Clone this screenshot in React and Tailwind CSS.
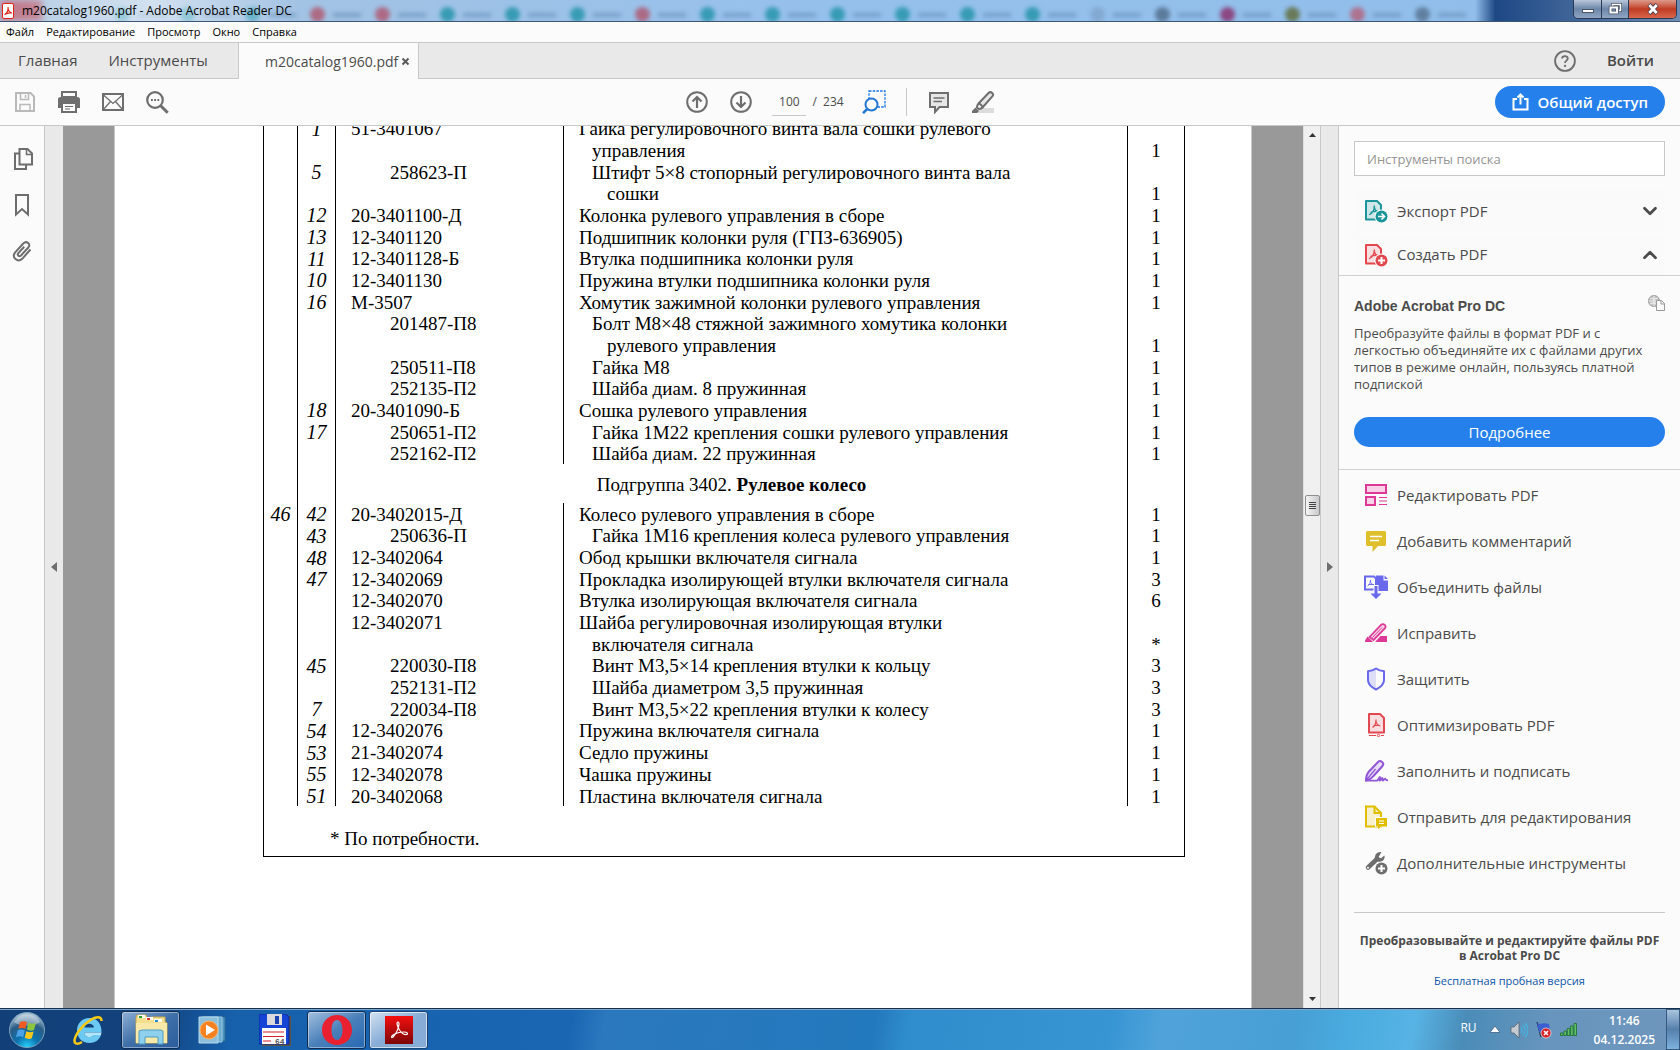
import { ChevronDown, ChevronUp } from "lucide-react";

const PARTS_TOP = [
  { pos: "1", code: "51-3401067", name: "Гайка регулировочного винта вала сошки рулевого" },
  { name: "управления", level: 1, qty: "1" },
  { pos: "5", code: "258623-П", sub: true, name: "Штифт 5×8 стопорный регулировочного винта вала", level: 1 },
  { name: "сошки", level: 2, qty: "1" },
  { pos: "12", code: "20-3401100-Д", name: "Колонка рулевого управления в сборе", qty: "1" },
  { pos: "13", code: "12-3401120", name: "Подшипник колонки руля (ГПЗ-636905)", qty: "1" },
  { pos: "11", code: "12-3401128-Б", name: "Втулка подшипника колонки руля", qty: "1" },
  { pos: "10", code: "12-3401130", name: "Пружина втулки подшипника колонки руля", qty: "1" },
  { pos: "16", code: "М-3507", name: "Хомутик зажимной колонки рулевого управления", qty: "1" },
  { code: "201487-П8", sub: true, name: "Болт М8×48 стяжной зажимного хомутика колонки", level: 1 },
  { name: "рулевого управления", level: 2, qty: "1" },
  { code: "250511-П8", sub: true, name: "Гайка М8", level: 1, qty: "1" },
  { code: "252135-П2", sub: true, name: "Шайба диам. 8 пружинная", level: 1, qty: "1" },
  { pos: "18", code: "20-3401090-Б", name: "Сошка рулевого управления", qty: "1" },
  { pos: "17", code: "250651-П2", sub: true, name: "Гайка 1М22 крепления сошки рулевого управления", level: 1, qty: "1" },
  { code: "252162-П2", sub: true, name: "Шайба диам. 22 пружинная", level: 1, qty: "1" },
];

const PARTS_WHEEL = [
  { fig: "46", pos: "42", code: "20-3402015-Д", name: "Колесо рулевого управления в сборе", qty: "1" },
  { pos: "43", code: "250636-П", sub: true, name: "Гайка 1М16 крепления колеса рулевого управления", level: 1, qty: "1" },
  { pos: "48", code: "12-3402064", name: "Обод крышки включателя сигнала", qty: "1" },
  { pos: "47", code: "12-3402069", name: "Прокладка изолирующей втулки включателя сигнала", qty: "3" },
  { code: "12-3402070", name: "Втулка изолирующая включателя сигнала", qty: "6" },
  { code: "12-3402071", name: "Шайба регулировочная изолирующая втулки" },
  { name: "включателя сигнала", level: 1, qty: "*" },
  { pos: "45", code: "220030-П8", sub: true, name: "Винт М3,5×14 крепления втулки к кольцу", level: 1, qty: "3" },
  { code: "252131-П2", sub: true, name: "Шайба диаметром 3,5 пружинная", level: 1, qty: "3" },
  { pos: "7", code: "220034-П8", sub: true, name: "Винт М3,5×22 крепления втулки к колесу", level: 1, qty: "3" },
  { pos: "54", code: "12-3402076", name: "Пружина включателя сигнала", qty: "1" },
  { pos: "53", code: "21-3402074", name: "Седло пружины", qty: "1" },
  { pos: "55", code: "12-3402078", name: "Чашка пружины", qty: "1" },
  { pos: "51", code: "20-3402068", name: "Пластина включателя сигнала", qty: "1" },
];

const INDENT = ["pl-[15px]", "pl-[28px]", "pl-[43px]"];

const MENU = ["Файл", "Редактирование", "Просмотр", "Окно", "Справка"];

// browser tabs showing through the glass title bar
const GLASS_TABS = [
  "bg-[#3a9fb8]", "bg-[#3a9fb8]", "bg-[#3a9fb8]", "bg-[#b0556c]", "bg-[#b0556c]", "bg-[#1f92a8]", "bg-[#1f92a8]",
  "bg-[#1f92a8]", "bg-[#b0556c]", "bg-[#1f92a8]", "bg-[#1f92a8]", "bg-[#1f92a8]", "bg-[#1f92a8]", "bg-[#1f92a8]",
  "bg-[#1f92a8]", "bg-[#7fa4cb]", "bg-[#4f6b88]", "bg-[#8a2a68]", "bg-[#5f6a35]", "bg-[#b5607a]", "bg-[#56718f]",
];

function Svg({ size = 24, className = "", children }) {
  return (
    <svg width={size} height={size} viewBox="0 0 24 24" fill="none" className={`shrink-0 ${className}`} aria-hidden="true">
      {children}
    </svg>
  );
}

function PdfMark({ color, width = 1.3 }) {
  return (
    <path
      d="M5.500 15.500c3.200-1.500 4.800-5.500 4.800-8.500M10.300 7c0 3.500 2 5.500 4.700 5.700M7 13.400c2-1 4.500-1.400 6.800-1"
      stroke={color}
      strokeWidth={width}
      strokeLinecap="round"
    />
  );
}

function DocBadge({ color, tint, children }) {
  return (
    <Svg>
      <path d="M2 2h11l4 4v14.500H2z" fill={tint} stroke={color} strokeWidth="2" strokeLinejoin="round" />
      <PdfMark color={color} />
      <circle cx="17.500" cy="17.500" r="7" fill="#fbfbfb" />
      <circle cx="17.500" cy="17.500" r="6" fill={color} />
      {children}
    </Svg>
  );
}

const TOOLS = [
  {
    label: "Редактировать PDF",
    icon: (
      <Svg>
        <rect x="2" y="2" width="20" height="8" fill="#f8d3e8" stroke="#dd3a97" strokeWidth="2" />
        <rect x="2" y="14" width="9" height="8" fill="#f8d3e8" stroke="#dd3a97" strokeWidth="2" />
        <path d="M15 14.500h8M15 18h8M15 21.500h8" stroke="#dd3a97" />
      </Svg>
    ),
  },
  {
    label: "Добавить комментарий",
    icon: (
      <Svg>
        <path d="M3.500 2h17A1.500 1.500 0 0 1 22 3.500v12a1.500 1.500 0 0 1-1.500 1.500H14l-5.500 6V17h-5A1.500 1.500 0 0 1 2 15.500v-12A1.500 1.500 0 0 1 3.500 2z" fill="#dfbf2c" />
        <path d="M6 7.500h12M6 11.500h9" stroke="#fff" strokeWidth="1.500" />
      </Svg>
    ),
  },
  {
    label: "Объединить файлы",
    icon: (
      <Svg>
        <path d="M1 1.500h9l2 2v11H1z" fill="#fbfbfb" stroke="#6a69ee" strokeWidth="2" />
        <path d="M3.500 11c2-1 3-3.500 3-6M6.500 6c0 2.500 1.500 3.500 3.500 3.700M4.500 9.500h5" stroke="#6a69ee" />
        <path d="M12 .5h7.500v5H24V16H12z" fill="#6a69ee" />
        <path d="M20.500.5L24 4h-3.500z" fill="#6a69ee" />
        <path d="M12 10v8" stroke="#fbfbfb" strokeWidth="5" />
        <path d="M10.500 11h3v7.500h4L12 24l-5.500-5.500h4z" fill="#6a69ee" />
      </Svg>
    ),
  },
  {
    label: "Исправить",
    icon: (
      <Svg>
        <path d="M5.500 16L17 4c2.500-2.300 6.200.8 3.800 3.500L9.500 19z" fill="#f8d3e8" stroke="#dd3a97" strokeWidth="1.800" />
        <path d="M3.500 15.500L9 21H1v-1.500z" fill="#dd3a97" />
        <path d="M16.500 15H23v6H11z" fill="#dd3a97" />
        <path d="M8.500 16.500l9.500-10" stroke="#dd3a97" strokeWidth="1" />
      </Svg>
    ),
  },
  {
    label: "Защитить",
    icon: (
      <Svg>
        <path d="M12 2v20.500C6 19.500 4 17 4 13V4.500C7 4.300 10 3.500 12 2z" fill="#dedefa" />
        <path d="M12 1.500c2.500 1.800 5 2.600 8 2.800V13c0 4-3 7-8 9.500C7 20 4 17 4 13V4.300c3-.2 5.500-1 8-2.800z" stroke="#6a69ee" strokeWidth="2" strokeLinejoin="round" />
      </Svg>
    ),
  },
  {
    label: "Оптимизировать PDF",
    icon: (
      <Svg>
        <path d="M5 1h11l4 4v14.500H5z" fill="#f9dfe1" stroke="#e34850" strokeWidth="2" strokeLinejoin="round" />
        <path d="M8.500 14.500c2.500-1.500 3.500-4.500 3.500-8M12 8c.3 3 2 4.500 4.500 5M9.500 12.500h6" stroke="#e34850" strokeWidth="1.200" />
        <path d="M5 22.500h7M17 22.500h3" stroke="#e34850" />
        <circle cx="14.500" cy="22.500" r="1.200" stroke="#e34850" />
      </Svg>
    ),
  },
  {
    label: "Заполнить и подписать",
    icon: (
      <Svg>
        <path d="M2 21.500c0-4 .8-6.500 3-9L14 3c2.500-2.500 6.800 1 4.500 4l-9 10c-2 2.500-4 4-7.500 4.500z" fill="#e9dcf8" stroke="#9256d9" strokeWidth="2" />
        <path d="M2 21.500l9.500-11.500" stroke="#9256d9" strokeWidth="1.300" />
        <path d="M2 21.700h11c1-.2 2.500-4 3-3.700s-1 3.700 0 3.700 1.500-3 2.300-2.700-.3 2.700.7 2.700 1-2 2-2 .3 2 3 1.500" stroke="#9256d9" strokeWidth="1.800" />
      </Svg>
    ),
  },
  {
    label: "Отправить для редактирования",
    icon: (
      <Svg>
        <path d="M2 1.500h8.500L17 8v13.500H2z" fill="#f7f0cd" stroke="#dfbf00" strokeWidth="2" />
        <path d="M10.500 1.500V8H17" stroke="#dfbf00" strokeWidth="2" />
        <path d="M11 12h13v10h-6l-4 3v-3h-3z" fill="#fbfbfb" />
        <path d="M12 13h11v8.500h-5.500L14 24v-2.500h-2z" fill="#dfbf00" />
        <path d="M15 16h5M15 18.500h5" stroke="#fff" strokeWidth="1.200" />
      </Svg>
    ),
  },
  {
    label: "Дополнительные инструменты",
    icon: (
      <Svg>
        <path d="M4 16.500l9-8.500" stroke="#6e6e6e" strokeWidth="4.500" strokeLinecap="round" />
        <path d="M17.500 1c-4-.8-7.500 2.500-6.300 6.700 1.300 3.600 6 4.300 8.300 1.300 1.200-1.600 1.300-3 .9-4.500L17 7.300l-2.500-1z" fill="#6e6e6e" />
        <circle cx="4" cy="16.800" r="1" fill="#fbfbfb" />
        <circle cx="17.500" cy="17.500" r="7" fill="#fbfbfb" />
        <circle cx="17.500" cy="17.500" r="6" fill="#6e6e6e" />
        <path d="M17.500 14v7M14 17.500h7" stroke="#fff" strokeWidth="2" />
      </Svg>
    ),
  },
];

function TitleBar() {
  return (
    <header className="relative flex h-[22px] shrink-0 items-center overflow-hidden border-b border-[#3d5675] bg-linear-to-r from-[#a9c4df] via-[#95c0ec] to-[#8fbde9]">
      <div className="absolute inset-0 flex overflow-hidden" aria-hidden="true">
        <span className="h-full w-[42px] shrink-0 bg-[#b5677c] blur-[3px]" />
        <span className="w-[73px] shrink-0" />
        {GLASS_TABS.map((color, i) => (
          <span key={i} className="flex w-[65px] shrink-0 items-center gap-2 pt-2">
            <span className={`size-[15px] rounded-full opacity-80 blur-[2px] ${color}`} />
            <span className="h-1 w-7 bg-[#5f88b4]/60 blur-[2px]" />
          </span>
        ))}
      </div>
      <div className="absolute inset-y-0 left-0 w-[300px] bg-linear-to-r from-white/10 via-white/50 to-transparent" />
      <div className="absolute inset-y-0 right-0 w-[205px] bg-linear-to-r from-transparent via-[#1d4884] via-10% to-[#6f8db4]" />
      <div className="relative flex min-w-0 flex-1 items-center gap-2 pl-[2px]">
        <svg width="12" height="16" viewBox="0 0 12 16" fill="none" className="shrink-0" aria-hidden="true">
          <rect x=".5" y=".5" width="11" height="15" rx="1.500" fill="#fff" stroke="#e1251b" />
          <path d="M2.500 11.500c3-1 4-5 3.500-7.500 0 3 1.500 5.500 4 6-2.500-.5-5 0-7.500 1.500z" stroke="#e1251b" strokeWidth="1.200" />
        </svg>
        <h1 className="truncate text-[12px] leading-4 text-black">m20catalog1960.pdf - Adobe Acrobat Reader DC</h1>
      </div>
      <div className="relative mr-[3px] flex h-[19px] self-start overflow-hidden rounded-b-[5px] border border-t-0 border-[#2b3b55]">
        <button aria-label="Свернуть" className="flex w-[28px] items-center justify-center border-r border-[#2b3b55] bg-linear-to-b from-[#b9c7da] via-[#6d86a9] to-[#90a6c4]">
          <span className="mt-1 h-[4px] w-[12px] border border-[#4a5568] bg-white" />
        </button>
        <button aria-label="Свернуть в окно" className="flex w-[27px] items-center justify-center border-r border-[#2b3b55] bg-linear-to-b from-[#b9c7da] via-[#6d86a9] to-[#90a6c4]">
          <svg width="14" height="12" viewBox="0 0 14 12" fill="none" aria-hidden="true">
            <path d="M4.500 3V1.500h8v6H11" stroke="#4a5568" strokeWidth="3" />
            <path d="M4.500 3V1.500h8v6H11" stroke="#fff" strokeWidth="1.500" />
            <rect x="2.500" y="4.500" width="6.500" height="5" stroke="#4a5568" strokeWidth="3.500" />
            <rect x="2.500" y="4.500" width="6.500" height="5" stroke="#fff" strokeWidth="2" />
          </svg>
        </button>
        <button aria-label="Закрыть" className="flex w-[47px] items-center justify-center bg-linear-to-b from-[#dc9a8a] via-[#c03a22] to-[#d9674c]">
          <svg width="14" height="12" viewBox="0 0 14 12" fill="none" aria-hidden="true">
            <path d="M3 1.500l8 9M11 1.500l-8 9" stroke="#4f3a45" strokeWidth="4.500" />
            <path d="M3.300 2l7.400 8M10.700 2l-7.400 8" stroke="#fff" strokeWidth="2.800" />
          </svg>
        </button>
      </div>
    </header>
  );
}

function TabBar() {
  return (
    <div className="flex h-[36px] shrink-0 bg-[#e9e9e9] text-[15px] text-[#4b4b4b]">
      <div className="flex w-[239px] items-center gap-[31px] border-r border-b border-[#c8c8c8] pl-[18px]">
        <button>Главная</button>
        <button>Инструменты</button>
      </div>
      <div className="flex w-[179px] items-center justify-between bg-[#fbfbfb] pr-[8px] pl-[26px]">
        <span className="text-[14px]">m20catalog1960.pdf</span>
        <button aria-label="Закрыть вкладку">
          <svg width="9" height="9" viewBox="0 0 9 9" aria-hidden="true">
            <path d="M1.500 1.500l6 6M7.500 1.500l-6 6" stroke="#5a5a5a" strokeWidth="2" />
          </svg>
        </button>
      </div>
      <div className="flex flex-1 items-center justify-end gap-[31px] border-b border-l border-[#c8c8c8] pr-[26px]">
        <button aria-label="Справка">
          <Svg size={22} className="block">
            <circle cx="12" cy="12" r="10.800" stroke="#6e6e6e" strokeWidth="2" />
            <path d="M8.800 9.300c.2-3.600 6.300-3.500 6.200 0 0 2.300-3 2.300-3 4.900" stroke="#6e6e6e" strokeWidth="2" />
            <circle cx="12" cy="17.300" r="1.300" fill="#6e6e6e" />
          </Svg>
        </button>
        <button className="font-semibold">Войти</button>
      </div>
    </div>
  );
}

function Toolbar() {
  return (
    <div className="grid h-[47px] shrink-0 grid-cols-[1fr_auto_1fr] items-center border-b border-[#c8c8c8] bg-[#fbfbfb] pr-[15px] pl-[13px]">
      <div className="flex items-center gap-[20px]">
        <button aria-label="Сохранить">
          <Svg className="block">
            <path d="M3 3h14.500L21 6.500V21H3z" stroke="#b9b9b9" strokeWidth="2" />
            <path d="M7.500 3v6.500h8V3M7 21v-6.500h10V21" stroke="#b9b9b9" strokeWidth="1.500" />
            <path d="M12.500 5v3" stroke="#b9b9b9" strokeWidth="1.500" />
          </Svg>
        </button>
        <button aria-label="Печать">
          <Svg className="block">
            <path d="M5 2h14v5H5z" stroke="#6e6e6e" strokeWidth="2" />
            <path d="M1 9.500A2.500 2.500 0 0 1 3.500 7h17A2.500 2.500 0 0 1 23 9.500V18H1z" fill="#6e6e6e" />
            <path d="M5 13h14v9H5z" fill="#fbfbfb" stroke="#6e6e6e" strokeWidth="2" />
            <path d="M8 16.500h8M8 19h5" stroke="#6e6e6e" />
          </Svg>
        </button>
        <button aria-label="Отправить по почте">
          <Svg className="block">
            <path d="M2 4h20v16H2z" stroke="#6e6e6e" strokeWidth="2" />
            <path d="M2.500 5l9.500 8.500L21.500 5M2.500 19.500l7-8M21.500 19.500l-7-8" stroke="#6e6e6e" strokeWidth="1.300" />
          </Svg>
        </button>
        <button aria-label="Найти">
          <Svg className="block">
            <circle cx="10" cy="10" r="7.800" stroke="#6e6e6e" strokeWidth="2.200" />
            <path d="M15.700 15.700l7 7" stroke="#6e6e6e" strokeWidth="3" />
            <path d="M6 10h1.800M9.200 10H11M12.400 10h1.800" stroke="#6e6e6e" strokeWidth="1.800" />
          </Svg>
        </button>
      </div>

      <div className="flex items-center pl-[2px]">
        <button aria-label="Предыдущая страница">
          <Svg className="block">
            <circle cx="12" cy="12" r="9.800" stroke="#6e6e6e" strokeWidth="2" />
            <path d="M12 18V7.500M7.500 11.500L12 7l4.500 4.500" stroke="#6e6e6e" strokeWidth="2.200" />
          </Svg>
        </button>
        <button aria-label="Следующая страница" className="ml-[20px]">
          <Svg className="block">
            <circle cx="12" cy="12" r="9.800" stroke="#6e6e6e" strokeWidth="2" />
            <path d="M12 6v10.500M7.500 12.500L12 17l4.500-4.500" stroke="#6e6e6e" strokeWidth="2.200" />
          </Svg>
        </button>
        <input
          aria-label="Номер страницы"
          defaultValue="100"
          className="ml-[19px] h-[28px] w-[34px] border-b border-[#c8c8c8] bg-transparent text-center text-[12px] text-[#4b4b4b] outline-none"
        />
        <span className="ml-[6px] text-[12px] text-[#4b4b4b]">/&nbsp; 234</span>
        <button aria-label="Масштаб выделения" className="ml-[18px]">
          <Svg className="block">
            <rect x="7" y="1" width="16" height="16" stroke="#1473e6" strokeWidth="1.300" strokeDasharray="2.500 1.200" />
            <circle cx="9.500" cy="14.500" r="6" fill="#fbfbfb" stroke="#2277d4" strokeWidth="2" />
            <path d="M5.200 19L1 23.200" stroke="#2277d4" strokeWidth="2.500" />
          </Svg>
        </button>
        <span className="ml-[20px] h-[28px] w-px bg-[#c8c8c8]" />
        <button aria-label="Комментарий" className="ml-[20px]">
          <Svg className="block">
            <path d="M3 3h18v14h-8.500L8 22v-5H3z" fill="#e6e6e6" stroke="#6e6e6e" strokeWidth="2" />
            <path d="M6.500 8h11M6.500 11.500h8.500" stroke="#6e6e6e" strokeWidth="1.300" />
          </Svg>
        </button>
        <button aria-label="Выделение цветом" className="ml-[20px]">
          <Svg className="block">
            <path d="M8 18h15v5H5z" fill="#dcdcdc" />
            <path d="M8 13L17.500 3c2.500-2.300 6 .9 3.800 3.400L12 17z" fill="#e6e6e6" stroke="#6e6e6e" strokeWidth="2" />
            <path d="M8 13c-1.500 1.500-2 3-2 4.500l2 1.500c1.500 0 3-.8 4-2" stroke="#6e6e6e" strokeWidth="2" />
            <path d="M4.500 17.500L8 21l-2 2H1v-2z" fill="#6e6e6e" />
          </Svg>
        </button>
      </div>

      <button className="flex h-[32px] items-center gap-[9px] justify-self-end rounded-full bg-[#2680eb] px-[17px] text-[15px] font-semibold text-white">
        <svg width="17" height="18" viewBox="0 0 17 18" fill="none" aria-hidden="true">
          <path d="M5 6H1.500v10.500h14V6H12" stroke="#fff" strokeWidth="2" />
          <path d="M8.500 11.500V3M5.500 4.500l3-3 3 3" stroke="#fff" strokeWidth="2" />
        </svg>
        Общий доступ
      </button>
    </div>
  );
}

function LeftRail() {
  return (
    <>
      <nav className="flex w-[45px] shrink-0 flex-col items-start gap-[22px] border-r border-[#c8c8c8] bg-[#fbfbfb] pt-[21px] pl-[10px]">
        <button aria-label="Миниатюры страниц">
          <Svg className="block">
            <path d="M9.500 2h8l4.500 4.500v11H9.500z" stroke="#6e6e6e" strokeWidth="2" />
            <path d="M16.500 2v5.500H22" stroke="#6e6e6e" strokeWidth="1.500" />
            <path d="M9 6.500H5V22h11v-4" stroke="#6e6e6e" strokeWidth="2" />
          </Svg>
        </button>
        <button aria-label="Закладки">
          <Svg className="block">
            <path d="M6 2h12v19.500L12 16l-6 5.500z" stroke="#6e6e6e" strokeWidth="2" />
          </Svg>
        </button>
        <button aria-label="Вложения">
          <Svg className="block">
            <path
              d="M20.500 10.500l-8.300 9.300c-4.500 4.400-11-1.500-7-6.500l8.300-9c3.200-3 7.500.8 4.800 4.200l-7.300 8c-2 1.800-4.300-.3-2.600-2.400l5.800-6.300"
              stroke="#6e6e6e"
              strokeWidth="2"
            />
          </Svg>
        </button>
      </nav>
      <button aria-label="Скрыть панель навигации" className="flex w-[18px] shrink-0 items-center justify-center bg-[#e9e9e9]">
        <svg width="6" height="10" viewBox="0 0 6 10" aria-hidden="true">
          <path d="M6 0v10L0 5z" fill="#6e6e6e" />
        </svg>
      </button>
    </>
  );
}

function PartRow({ fig, pos, code, sub, name, level = 0, qty }) {
  return (
    <tr>
      <td className="border-r border-black pt-[2px] text-center text-[20px] italic">{fig}</td>
      <td className="border-r border-black pt-[2px] text-center text-[20px] italic">{pos}</td>
      <td className={`border-r border-black pt-[3px] ${sub ? "pl-[54px]" : "pl-[15px]"}`}>{code}</td>
      <td className={`border-r border-black pt-[3px] ${INDENT[level]}`}>{name}</td>
      <td className="pt-[3px] text-center">{qty}</td>
    </tr>
  );
}

function Document() {
  return (
    <main className="flex min-w-0 flex-1 overflow-hidden bg-[#999999] px-[51px]">
      <article className="min-w-0 flex-1 overflow-hidden border-x border-[#c8c8c8] bg-white">
        <div className="-mt-[9px] ml-[148px] w-[922px] border border-t-0 border-black pb-[8px] font-['Liberation_Serif','Times_New_Roman',serif] text-[19px] leading-[18px] text-black">
          <table className="h-[689px] w-full table-fixed border-separate border-spacing-0">
            <colgroup>
              <col className="w-[34px]" />
              <col className="w-[38px]" />
              <col className="w-[228px]" />
              <col className="w-[564px]" />
              <col />
            </colgroup>
            <tbody>
              {PARTS_TOP.map((part, i) => (
                <PartRow key={i} {...part} />
              ))}
              <tr className="h-[39px]">
                <td className="border-r border-black" />
                <td className="border-r border-black" />
                <td colSpan={2} className="border-r border-black pt-[3px] text-center">
                  Подгруппа 3402. <b>Рулевое колесо</b>
                </td>
                <td />
              </tr>
              {PARTS_WHEEL.map((part, i) => (
                <PartRow key={i} {...part} />
              ))}
            </tbody>
          </table>
          <p className="mt-[24px] ml-[66px]">* По потребности.</p>
        </div>
      </article>
    </main>
  );
}

function Scrollbar() {
  return (
    <>
      <div className="flex w-[17px] shrink-0 flex-col items-center border-l border-[#e0e0e0] bg-[#f0f0f0] py-[7px]" aria-hidden="true">
        <svg width="7" height="4" viewBox="0 0 7 4">
          <path d="M0 4h7L3.500 0z" fill="#333" />
        </svg>
        <span className="mt-[358px] flex h-[21px] w-[15px] flex-col items-center justify-center gap-px rounded-[2px] border border-[#8f8f8f] bg-linear-to-r from-[#f5f5f5] to-[#c9c9cb]">
          <span className="h-px w-[7px] bg-[#444]" />
          <span className="h-px w-[7px] bg-[#444]" />
          <span className="h-px w-[7px] bg-[#444]" />
          <span className="h-px w-[7px] bg-[#444]" />
        </span>
        <svg width="7" height="4" viewBox="0 0 7 4" className="mt-auto">
          <path d="M0 0h7L3.500 4z" fill="#333" />
        </svg>
      </div>
      <button aria-label="Скрыть панель инструментов" className="flex w-[18px] shrink-0 items-center justify-center border-l border-[#c8c8c8] bg-[#e9e9e9]">
        <svg width="6" height="10" viewBox="0 0 6 10" aria-hidden="true">
          <path d="M0 0v10l6-5z" fill="#6e6e6e" />
        </svg>
      </button>
    </>
  );
}

function ToolsPanel() {
  return (
    <aside className="flex w-[342px] shrink-0 flex-col overflow-hidden border-l border-[#c8c8c8] bg-[#fbfbfb] text-[#4b4b4b]">
      <div className="border-b border-[#d0d0d0] px-[15px] pt-[15px]">
        <input
          type="search"
          aria-label="Инструменты поиска"
          placeholder="Инструменты поиска"
          className="h-[35px] w-full border border-[#c8c8c8] bg-white px-[12px] text-[13px] outline-none placeholder:text-[#959595]"
        />
        <button className="mt-[14px] flex h-[42px] w-full items-center gap-[9px] bg-[#fafafa] pr-[4px] pl-[10px] text-[15px]">
          <DocBadge color="#1b959a" tint="#cfe7e8">
            <path d="M14 17.500h6M17.500 14.500l3 3-3 3" stroke="#fff" strokeWidth="1.600" />
          </DocBadge>
          Экспорт PDF
          <ChevronDown size={22} strokeWidth={3} className="ml-auto" />
        </button>
        <button className="mt-[2px] flex h-[41px] w-full items-center gap-[9px] bg-[#fafafa] pr-[4px] pl-[10px] text-[15px]">
          <DocBadge color="#e34850" tint="#f9dfe1">
            <path d="M17.500 14v7M14 17.500h7" stroke="#fff" strokeWidth="2" />
          </DocBadge>
          Создать PDF
          <ChevronUp size={22} strokeWidth={3} className="ml-auto" />
        </button>
      </div>

      <section className="border-b border-[#d0d0d0] px-[15px] pt-[19px] pb-[22px]">
        <div className="flex items-start justify-between">
          <h2 className="mt-[1px] font-['Liberation_Sans',Arial,sans-serif] text-[14px] leading-[20px] font-bold">Adobe Acrobat Pro DC</h2>
          <svg width="17" height="16" viewBox="0 0 17 16" fill="none" aria-hidden="true">
            <circle cx="6" cy="6" r="5.500" fill="#c4c4c4" stroke="#999" />
            <path d="M.5 6h11M6 .5v11M2 3c2.500 1.200 5.500 1.200 8 0M2 9c2.500-1.200 5.500-1.200 8 0" stroke="#fff" strokeWidth=".7" />
            <path d="M8.500 5.500h5l3 3v7h-8z" fill="#fbfbfb" stroke="#999" />
            <path d="M13 5.500V9h3.500" stroke="#999" />
          </svg>
        </div>
        <p className="mt-[9px] w-[290px] text-[13px] leading-[17px]">
          Преобразуйте файлы в формат PDF и с легкостью объединяйте их с файлами других типов в режиме онлайн, пользуясь платной подпиской
        </p>
        <button className="mt-[24px] h-[30px] w-full rounded-full bg-[#2680eb] text-[15px] text-white">Подробнее</button>
      </section>

      <ul className="mx-[15px] border-b border-[#c8c8c8] pt-[2px] pb-[26px]">
        {TOOLS.map((tool) => (
          <li key={tool.label}>
            <button className="flex h-[46px] w-full items-center gap-[9px] pl-[10px] text-[15px]">
              {tool.icon}
              {tool.label}
            </button>
          </li>
        ))}
      </ul>

      <footer className="px-[15px] pt-[20px] text-center text-[12px] leading-[15px]">
        <p className="font-bold">
          Преобразовывайте и редактируйте файлы PDF
          <br />в Acrobat Pro DC
        </p>
        <a href="#" className="mt-[10px] inline-block text-[11px] text-[#0d55a8]">
          Бесплатная пробная версия
        </a>
      </footer>
    </aside>
  );
}

function Taskbar() {
  return (
    <footer className="relative flex h-[42px] shrink-0 items-center border-t border-[#16304e] bg-[linear-gradient(100deg,#123f78_0%,#12427c_9%,#1660ac_14%,#1a66b3_34%,#2b78be_36%,#2379bd_52%,#2f8dcd_54%,#3795d3_66%,#4fa3da_69%,#479fd5_77%,#49abdf_80%,#57b3e4_84%,#4a8cb8_87%,#6795bd_92%,#6f96bd_100%)] shadow-[inset_0_1px_0_#7fa8cc]">
      <button aria-label="Пуск" className="ml-[8px]">
        <svg width="38" height="38" viewBox="0 0 38 38" aria-hidden="true">
          <defs>
            <radialGradient id="orb" cx=".5" cy="1" r=".95">
              <stop offset="0" stopColor="#27d6ff" />
              <stop offset=".35" stopColor="#0c74b0" />
              <stop offset=".7" stopColor="#2a5c86" />
              <stop offset="1" stopColor="#a9c4d6" />
            </radialGradient>
          </defs>
          <circle cx="19" cy="19" r="17.500" fill="url(#orb)" stroke="#7ba2bd" />
          <path d="M6 11a15 15 0 0 1 26 0c-7 5-19 5-26 0z" fill="#fff" opacity=".35" />
          <path d="M12 11c2.500-1.300 4.800-1 7 .3L17.300 18c-2.300-1.300-4.500-1.300-7-.2z" fill="#ee5a24" />
          <path d="M20.500 11.800c2.500 1.300 5 1.300 7.500.2L26 19c-2.500 1-5 .8-7.200-.4z" fill="#8cc63e" />
          <path d="M9.800 19.300c2.500-1.200 4.800-1 7 .2l-1.700 6.800c-2.300-1.300-4.700-1.200-7.100 0z" fill="#4aa3e8" />
          <path d="M18.400 20.200c2.300 1.200 4.700 1.400 7.200.4l-1.800 6.700c-2.500 1-4.900.7-7.100-.5z" fill="#fbc81e" />
        </svg>
      </button>
      <button aria-label="Internet Explorer" className="ml-[26px]">
        <svg width="32" height="32" viewBox="0 0 32 32" fill="none" aria-hidden="true">
          <path
            fillRule="evenodd"
            d="M17.500 4C10 4 5 9.500 5 16.500S10 29 17.500 29c5.500 0 9.800-3 11.500-8h-7.500c-2.500 3.500-9 2.500-9.200-2.500H29.500C30 10 25 4 17.500 4zm-5 9.500c.8-5 9-5 9.500 0z"
            fill="#6cc9f1"
          />
          <path d="M12.300 18.500h17.200l-.5 2.500h-7.500c-2.500 3.500-9 2.500-9.200-2.500z" fill="#b4e6fa" />
          <path d="M29.500 7c.5-5-6-4.500-11.500-.8C10.500 11 3.500 20 2.500 26c-.5 4.500 3.500 4.500 7.500 2" stroke="#f6c915" strokeWidth="2.500" />
        </svg>
      </button>
      <button aria-label="Проводник" className="ml-[17px] flex h-[38px] w-[59px] items-center justify-center rounded-[3px] border border-[#0f2c50] bg-linear-to-br from-[#8fb0d4] via-[#3f6fa8] to-[#2a5d9e] inset-ring inset-ring-white/40">
        <svg width="34" height="31" viewBox="0 0 34 31" aria-hidden="true">
          <path d="M2 4l1-3h9l1 3h3l1-1h14v5l2 1v20H2z" fill="#f3df8e" stroke="#c9a94c" />
          <path d="M4 1h7v3H4z" fill="#fff" />
          <path d="M5 2h3v2H5z" fill="#2ca02c" />
          <path d="M12 3h7v3h-7z" fill="#fff" />
          <path d="M13 4h3v2h-3z" fill="#d33" />
          <path d="M20 5h8v3h-8z" fill="#fff" />
          <path d="M21 6h3v2h-3z" fill="#28c" />
          <path d="M2 9h31v20H2z" fill="#f8e9a8" />
          <path d="M5 17l3-1h19l2 1v13h-5v-7H11v7H5z" fill="#8fd0ee" stroke="#4f9cc4" />
        </svg>
      </button>
      <button aria-label="Проигрыватель Windows Media" className="ml-[17px]">
        <svg width="30" height="28" viewBox="0 0 30 28" aria-hidden="true">
          <path d="M8 1h20v24H8z" fill="#4e93bd" stroke="#2c6c98" />
          <path d="M5 1h20v25H5z" fill="#69acd0" stroke="#9dcbe3" />
          <path d="M2 1h19v26H2z" fill="#8bbfdc" stroke="#b6dbee" />
          <circle cx="12" cy="14" r="9" fill="#f58220" stroke="#fbb46c" />
          <path d="M9 8.500v11l9-5.500z" fill="#fff" />
        </svg>
      </button>
      <button aria-label="Total Commander" className="ml-[32px]">
        <svg width="32" height="32" viewBox="0 0 32 32" aria-hidden="true">
          <path d="M3 2h29v30H3z" fill="#5d5348" />
          <path d="M0 0h27l3 3v27H0z" fill="#1443d6" stroke="#0b2a96" />
          <path d="M8 0h15v11H8z" fill="#d9d9de" />
          <path d="M16 2h4v8h-4z" fill="#1a3fb0" />
          <path d="M3 14h24v16H3z" fill="#fff" />
          <path d="M4 18h21M4 22.500h21M4 27h8" stroke="#d11f2d" strokeWidth="1.200" />
          <text x="16" y="30" fontSize="8" fontWeight="700" fill="#555" fontFamily="Liberation Mono, monospace">64</text>
        </svg>
      </button>
      <button aria-label="Opera" className="ml-[16px] flex h-[38px] w-[59px] items-center justify-center rounded-[3px] border border-[#0f2c50] bg-linear-to-br from-[#a3c0de] via-[#4a80ba] to-[#2468b2] inset-ring inset-ring-white/40">
        <svg width="32" height="32" viewBox="0 0 32 32" aria-hidden="true">
          <path
            fillRule="evenodd"
            d="M16 1C7.500 1 1 7.500 1 16s6.500 15 15 15 15-6.500 15-15S24.500 1 16 1zm0 5c3.500 0 5.500 4.500 5.500 10S19.500 26 16 26s-5.500-4.500-5.500-10S12.500 6 16 6z"
            fill="#e8202f"
          />
        </svg>
      </button>
      <button aria-label="Adobe Acrobat Reader" className="ml-[3px] flex h-[38px] w-[59px] items-center justify-center rounded-[3px] border border-[#1d4470] bg-linear-to-br from-[#d4e2f1] via-[#87acd6] to-[#86add8] inset-ring inset-ring-white/60">
        <svg width="28" height="28" viewBox="0 0 28 28" fill="none" aria-hidden="true">
          <defs>
            <linearGradient id="adobe" x2="0" y2="1">
              <stop stopColor="#f50f0f" />
              <stop offset="1" stopColor="#7a0608" />
            </linearGradient>
          </defs>
          <path d="M0 0h28v28H0z" fill="url(#adobe)" />
          <path d="M13 6c-2 0-.5 5 1.500 8s5 5 7 4.500 1-2.500-2.500-2.500c-4 0-8 1-11 3-2.500 1.700-1.500 3.500.5 1.500 2.500-2.500 5.500-9 5.500-12.500 0-1.500-.5-2-1-2z" stroke="#fff" strokeWidth="1.200" />
        </svg>
      </button>

      <div className="ml-auto flex h-full items-center text-[12px] text-white">
        <span className="mb-1">RU</span>
        <button aria-label="Отображать скрытые значки" className="ml-[13px]">
          <svg width="10" height="7" viewBox="0 0 10 7" aria-hidden="true">
            <path d="M0 6.500h10L5 0z" fill="#fff" stroke="#3d5f83" strokeWidth=".8" />
          </svg>
        </button>
        <svg width="18" height="18" viewBox="0 0 18 18" fill="none" className="ml-[10px]" aria-hidden="true">
          <path d="M1 6h3l5-5v16l-5-5H1z" fill="#c5cbd1" stroke="#59636c" strokeWidth=".8" />
          <path d="M11 6c1.500 2 1.500 4 0 6M13 4c2.700 3 2.700 7 0 10M15 2c4 4 4 10 0 14" stroke="#45b5e0" strokeWidth="1.200" />
        </svg>
        <svg width="17" height="18" viewBox="0 0 17 18" fill="none" className="ml-[7px]" aria-hidden="true">
          <path d="M2 1l4 15" stroke="#234" strokeWidth="1.200" />
          <path d="M2 2c4 2 6-1 12 1l1 8c-5-2-7 1-11 0z" fill="#3b5fd0" />
          <circle cx="11" cy="12" r="5" fill="#d3222a" stroke="#fbe6e6" strokeWidth=".7" />
          <path d="M9 10l4 4M13 10l-4 4" stroke="#fff" strokeWidth="1.600" />
        </svg>
        <svg width="17" height="13" viewBox="0 0 17 13" className="ml-[8px]" aria-hidden="true">
          <path d="M.5 10h2.500v2.500H.5zM4 8h2.500v4.500H4zM7.300 5.500h2.500v7H7.300zM10.600 3h2.500v9.500h-2.500zM14 .5h2.500v12H14z" fill="#5fc26b" stroke="#1c6a2a" strokeWidth=".8" />
        </svg>
        <div className="ml-[17px] text-center leading-[19px] font-semibold">
          <p>11:46</p>
          <p>04.12.2025</p>
        </div>
        <button aria-label="Свернуть все окна" className="ml-[11px] h-full w-[14px] border border-[#35597f] bg-linear-to-b from-[#a9c4de] via-[#5580ab] to-[#7fb2df]" />
      </div>
    </footer>
  );
}

export default function App() {
  return (
    <div className="flex h-screen flex-col overflow-hidden bg-[#fbfbfb] font-['Open_Sans','Segoe_UI',sans-serif]">
      <TitleBar />
      <nav className="flex h-[21px] shrink-0 items-center gap-[12px] border-b border-[#c8c8c8] pl-[6px] text-[11px] leading-4 text-black">
        {MENU.map((item) => (
          <button key={item}>{item}</button>
        ))}
      </nav>
      <TabBar />
      <Toolbar />
      <div className="flex min-h-0 flex-1">
        <LeftRail />
        <Document />
        <Scrollbar />
        <ToolsPanel />
      </div>
      <Taskbar />
    </div>
  );
}
